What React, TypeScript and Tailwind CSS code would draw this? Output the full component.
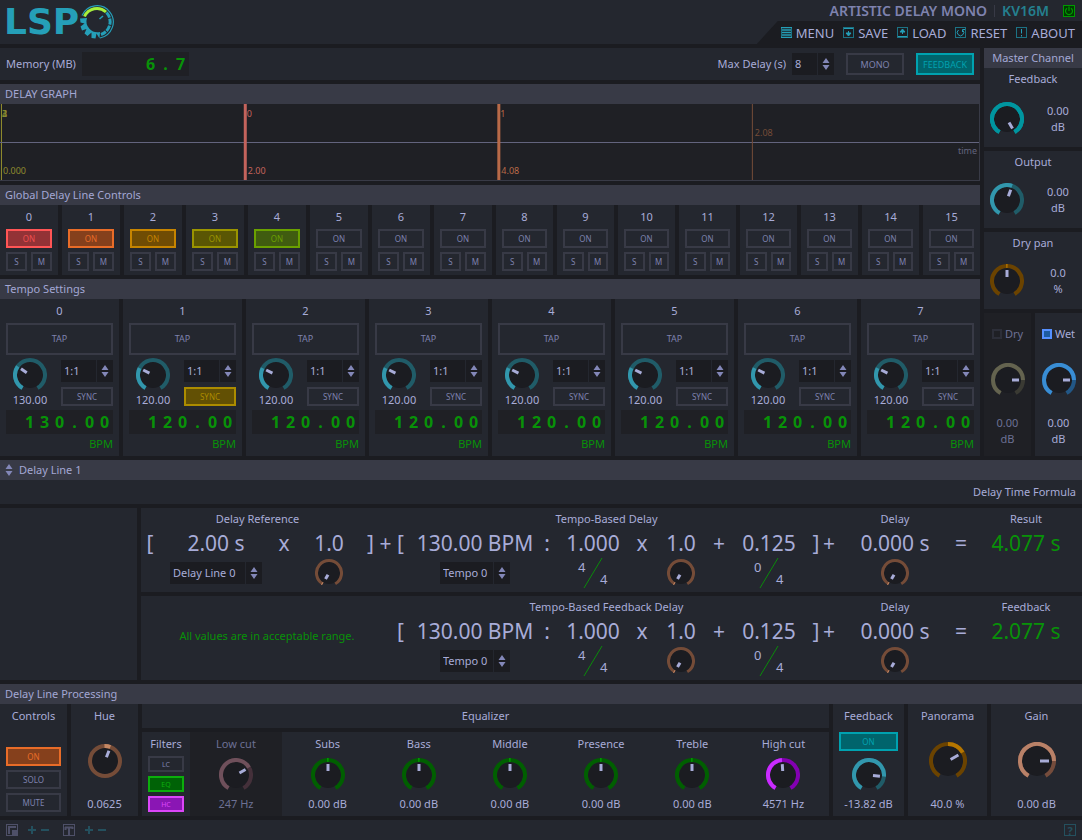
import { useState, type ReactNode } from 'react'
import clsx from 'clsx'

const TEAL = { dim: '#205c68', lit: '#3297ad' }
const BROWN = { dim: '#754c38', lit: '#c48763' }
const GREEN = { dim: '#005f00', lit: '#00a000' }
const ORANGE = { dim: '#6b4300', lit: '#b57600' }

type Tone = { dim: string; lit: string }

type KnobProps = {
  label: string
  // degrees clockwise from twelve o'clock
  angle: number
  from?: number
  size?: number
  tone?: Tone
  full?: boolean
}

function arc(c: number, r: number, a: number, b: number) {
  const point = (deg: number) => {
    const rad = (deg * Math.PI) / 180
    return `${c + r * Math.sin(rad)} ${c - r * Math.cos(rad)}`
  }
  return `M${point(a)} A${r} ${r} 0 ${b - a > 180 ? 1 : 0} 1 ${point(b)}`
}

function Knob({ label, angle, from = -150, size = 34, tone = TEAL, full = false }: KnobProps) {
  const c = size / 2
  const ring = size < 30 ? 3 : 4
  const r = c - ring / 2
  const tip = size < 30 ? 7 : size > 34 ? 12 : 11
  const tail = size < 30 ? 2 : size > 34 ? 3 : 4
  return (
    <span className="relative block shrink-0">
      <svg width={size} height={size} className="block" aria-hidden="true">
        <circle cx={c} cy={c} r={c - ring} fill="#1b1c21" />
        {full ? (
          <circle cx={c} cy={c} r={r} fill="none" stroke={tone.dim} strokeWidth={ring} />
        ) : (
          <path d={arc(c, r, -150, 150)} fill="none" stroke={tone.dim} strokeWidth={ring} />
        )}
        <path d={arc(c, r, from, Math.max(angle, from + 5))} fill="none" stroke={tone.lit} strokeWidth={ring} />
        <line
          x1={c}
          x2={c}
          y1={c - tail}
          y2={c - tip}
          stroke="#a8acd8"
          strokeWidth={3}
          transform={`rotate(${angle} ${c} ${c})`}
        />
      </svg>
      <input
        type="range"
        min={-180}
        max={180}
        defaultValue={angle}
        aria-label={label}
        className="absolute inset-0 h-full w-full cursor-pointer opacity-0"
      />
    </span>
  )
}

const IDLE = 'border-[#383a46] bg-[#24272f] text-[#7e82ae]'

type ToggleProps = {
  children: ReactNode
  label?: string
  on?: boolean
  tone?: string
  className?: string
}

function Toggle({ children, label, on = false, tone = IDLE, className }: ToggleProps) {
  const [active, setActive] = useState(on)
  return (
    <button
      type="button"
      aria-label={label}
      aria-pressed={active}
      onClick={() => setActive(!active)}
      className={clsx('flex items-center justify-center border-2 leading-none', active ? tone : IDLE, className)}
    >
      {children}
    </button>
  )
}

function Arrows() {
  return (
    <svg width="8" height="12" viewBox="0 0 8 12" fill="#8387b8" aria-hidden="true">
      <path d="M4 0 L7.5 5 H0.5 Z M4 12 L0.5 7 H7.5 Z" />
    </svg>
  )
}

function Combo({ label, options, className }: { label: string; options: string[]; className?: string }) {
  return (
    <span className={clsx('relative block h-[22px] bg-[#1b1c21]', className)}>
      <select
        aria-label={label}
        className="h-full w-full appearance-none bg-transparent pr-4 pl-[3px] text-[11px] leading-4 text-[#a8acd8] outline-none"
      >
        {options.map((o) => (
          <option key={o}>{o}</option>
        ))}
      </select>
      <span className="pointer-events-none absolute inset-y-0 right-0 flex w-[17px] items-center justify-center border-l border-[#24272f]">
        <Arrows />
      </span>
    </span>
  )
}

function Lcd({ value }: { value: string }) {
  return (
    <div className="flex h-6 w-[107px] items-center justify-end bg-[#1f2025] pr-px text-base font-bold text-[#089208]">
      {value.split('').map((ch, i) => (
        <span key={i} className="w-[15px] text-center">
          {ch}
        </span>
      ))}
    </div>
  )
}

function Bar({ children, className }: { children: ReactNode; className?: string }) {
  return (
    <h2 className={clsx('flex h-5 items-center bg-[#383a46] px-[5px] text-[11px] text-[#a3a7d4]', className)}>
      {children}
    </h2>
  )
}

function Logo() {
  return (
    <div className="flex items-center text-[#259fb8]">
      <span className="font-['DejaVu_Sans'] text-[36px] leading-[44px] font-bold">LSP</span>
      <svg width="36" height="36" viewBox="0 0 36 36" fill="none" aria-hidden="true">
        <path d="M3 11.500 A16.300 16.300 0 1 1 21 34" stroke="#259fb8" strokeWidth="1.200" />
        <path d="M5.500 12.500 A13.500 13.500 0 0 1 27 8" stroke="#a6f03c" strokeWidth="3" />
        <path d="M27.500 8.500 A13.500 13.500 0 0 1 22 30.500" stroke="#259fb8" strokeWidth="3" strokeDasharray="6 1" />
        <path
          d="M8 14 L1 14.500 L1.500 18.500 L5.500 19.500 L1.500 22.500 L3 26.500 L7.500 25 L5.500 29.500 L8.500 32 L12.500 28.500 L12.500 34 L16.500 34.500 L17.500 29.500 L20.500 34.500 L21 28 A11 11 0 0 1 8 14 Z"
          fill="#259fb8"
        />
        <path d="M20.500 15 L24 12" stroke="#259fb8" strokeWidth="1.600" />
      </svg>
    </div>
  )
}

const ICONS: Record<string, ReactNode> = {
  MENU: <path d="M0 0.500 H11 M1 3 H10 M1 5.500 H10 M1 8 H10 M0 10.500 H11" strokeWidth="1.300" />,
  SAVE: <path d="M1 1.500 H10 M5.500 4 V6 M3 6 H8 L5.500 9 Z" fill="#259fb8" />,
  LOAD: <path d="M1 9.500 H10 M5.500 7 V5 M3 5 H8 L5.500 2 Z" fill="#259fb8" />,
  RESET: <path d="M3.500 3 A3.200 3.200 0 1 0 7.500 3 M7.500 5 V2.500 H10" />,
  ABOUT: <path d="M5.500 2 V6.500 M5.500 8 V9.500" />,
}

function NavItem({ name }: { name: string }) {
  return (
    <button type="button" className="flex items-center gap-1 text-[13px] leading-5 text-[#a8acd8]">
      <svg width="11" height="11" viewBox="0 0 11 11" fill="none" stroke="#259fb8" aria-hidden="true">
        <rect x="0.500" y="0.500" width="10" height="10" stroke="#1c7284" />
        {ICONS[name]}
      </svg>
      {name}
    </button>
  )
}

function Header() {
  return (
    <header className="flex h-11 justify-between bg-[#24272f] pl-1">
      <Logo />
      <div className="flex flex-col items-end">
        <div className="flex h-[21px] items-center pr-[7px] text-sm font-semibold text-[#7e82ae]">
          <h1>ARTISTIC DELAY MONO</h1>
          <span className="mx-[7px] h-3 w-px bg-[#383a46]" />
          <span className="mr-[14px] text-[#24808f]">KV16M</span>
          <button type="button" aria-label="Bypass">
            <svg width="12" height="12" viewBox="0 0 12 12" fill="none" stroke="#009a00" className="block">
              <rect x="0.500" y="0.500" width="11" height="11" fill="#003c00" />
              <path d="M4 3.200 A3.500 3.500 0 1 0 8 3.200 M6 1.500 V6" strokeWidth="1.200" />
            </svg>
          </button>
        </div>
        <nav className="flex h-[23px] items-center gap-[9px] bg-[#1b1c21] pr-[7px] pl-6 [clip-path:polygon(21px_0,100%_0,100%_100%,0_100%)]">
          {Object.keys(ICONS).map((name) => (
            <NavItem key={name} name={name} />
          ))}
        </nav>
      </div>
    </header>
  )
}

function TopRow() {
  return (
    <div className="flex h-8 items-center bg-[#24272f] px-[6px]">
      <span className="w-[76px]">Memory (MB)</span>
      <Lcd value="6.7" />
      <span className="mr-[6px] ml-auto">Max Delay (s)</span>
      <Combo label="Max Delay (s)" options={['8', '16', '32']} className="w-[42px]" />
      <Toggle className="ml-3 h-[22px] w-[58px] text-[9px]">MONO</Toggle>
      <Toggle on tone="border-[#00a2b0] bg-[#00646c] text-[#00a2b0]" className="ml-3 h-[22px] w-[58px] text-[9px]">
        FEEDBACK
      </Toggle>
    </div>
  )
}

type MarkProps = { x: string; width?: number; color: string; top?: string; bottom?: string; mid?: string }

function Mark({ x, width = 1, color, top, bottom, mid }: MarkProps) {
  return (
    <svg x={x} overflow="visible" fill={color}>
      <rect width={width} height="76" />
      <text x={width} y="13">{top}</text>
      <text x={width + 1} y="70">{bottom}</text>
      <text x={width + 2} y="32">{mid}</text>
    </svg>
  )
}

function DelayGraph() {
  return (
    <section>
      <Bar>DELAY GRAPH</Bar>
      <svg className="block h-[77px] w-full border-r border-b border-[#383a46] bg-[#1f2025] text-[9px]">
        <Mark x="0.100%" color="#6f8a3e" top="2" />
        <Mark x="0.100%" color="#8f8a2e" top="3" />
        <Mark x="0.100%" color="#8f8a2e" top="4" bottom="0.000" />
        <rect y="38" width="100%" height="1" fill="#63647e" />
        <Mark x="24.900%" width={3} color="#c4635c" top="0" bottom="2.00" />
        <Mark x="50.800%" width={3} color="#b96a48" top="1" bottom="4.08" />
        <Mark x="76.800%" color="#754c38" mid="2.08" />
        <text x="99.800%" y="50" textAnchor="end" fill="#63647e">time</text>
      </svg>
    </section>
  )
}

const LINE_TONES = [
  'border-[#ff5555] bg-[#933236] text-[#f04f50]',
  'border-[#e86c28] bg-[#85401c] text-[#e86c28]',
  'border-[#c68400] bg-[#704c04] text-[#c68400]',
  'border-[#9a9400] bg-[#5a5604] text-[#9a9400]',
  'border-[#6aa000] bg-[#405c10] text-[#6aa000]',
]

function GlobalControls() {
  return (
    <section>
      <Bar>Global Delay Line Controls</Bar>
      <div className="grid grid-cols-[repeat(8,minmax(0,58fr))_repeat(8,minmax(0,57fr))] gap-1">
        {Array.from({ length: 16 }, (_, i) => (
          <div key={i} className="flex flex-col bg-[#24272f] px-[6px] pb-1">
            <span className="text-center leading-6">{i}</span>
            <Toggle label={`Line ${i} on`} on={i < 5} tone={LINE_TONES[i]} className="h-[19px] text-[8px]">
              ON
            </Toggle>
            <div className="mt-1 flex gap-1">
              <Toggle label={`Line ${i} solo`} className="h-[19px] flex-1 text-[8px]">S</Toggle>
              <Toggle label={`Line ${i} mute`} className="h-[19px] flex-1 text-[8px]">M</Toggle>
            </div>
          </div>
        ))}
      </div>
    </section>
  )
}

function TempoSettings() {
  return (
    <section>
      <Bar>Tempo Settings</Bar>
      <div className="grid grid-cols-8 gap-1">
        {Array.from({ length: 8 }, (_, i) => {
          const value = i === 0 ? '130.00' : '120.00'
          return (
            <div key={i} className="flex flex-col bg-[#24272f] px-[6px] pb-[2px]">
              <span className="text-center leading-6">{i}</span>
              <button
                type="button"
                aria-label={`Tap tempo ${i}`}
                className="h-8 border-2 border-[#383a46] text-[9px] text-[#7e82ae]"
              >
                TAP
              </button>
              <div className="mt-[3px] mb-[2px] flex justify-between">
                <div className="flex w-12 flex-col items-center">
                  <Knob label={`Tempo ${i}`} angle={i === 0 ? -55 : -63} />
                  <span className="leading-4">{value}</span>
                </div>
                <div className="flex w-[52px] flex-col gap-[5px] pt-[2px]">
                  <Combo label={`Tempo ${i} ratio`} options={['1:1', '1:2', '2:1']} />
                  <Toggle
                    label={`Tempo ${i} sync`}
                    on={i === 1}
                    tone="border-[#ac8c00] bg-[#625004] text-[#ac8c00]"
                    className="h-[19px] text-[8px]"
                  >
                    SYNC
                  </Toggle>
                </div>
              </div>
              <Lcd value={value} />
              <span className="text-right leading-5 text-[#089208]">BPM</span>
            </div>
          )
        })}
      </div>
    </section>
  )
}

type MasterKnobProps = {
  name: string
  unit: string
  value: string
  angle: number
  from?: number
  tone?: Tone
  className?: string
}

function MasterKnob({ name, unit, value, className, ...knob }: MasterKnobProps) {
  return (
    <div className={clsx('flex flex-col bg-[#24272f] pb-[1px]', className)}>
      <span className="text-center leading-[22px]">{name}</span>
      <div className="flex h-[54px] items-center gap-[10px] pl-[6px]">
        <Knob label={name} {...knob} />
        <span className="flex-1 text-center leading-4">
          {value}
          <br />
          {unit}
        </span>
      </div>
    </div>
  )
}

function MixStrip({ name, on = false, tone }: { name: string; on?: boolean; tone: Tone }) {
  return (
    <div
      className={clsx(
        'flex flex-1 flex-col items-center pt-3',
        on ? 'bg-[#24272f]' : 'bg-[#1f2025] text-[#6c7094]'
      )}
    >
      <label className="flex items-center gap-[3px] leading-[18px]">
        <input
          type="checkbox"
          defaultChecked={on}
          className="size-[10px] appearance-none border-2 border-[#2c2e38] checked:border-[#5590ff] checked:bg-[#1d5ba0]"
        />
        {name}
      </label>
      <div className="mt-5 mb-[18px]">
        <Knob label={name} angle={90} tone={tone} />
      </div>
      <span className="text-center leading-4">
        0.00
        <br />
        dB
      </span>
    </div>
  )
}

function MasterChannel() {
  return (
    <aside className="flex w-[98px] shrink-0 flex-col gap-1">
      <div className="bg-[#24272f]">
        <Bar className="justify-center">Master Channel</Bar>
        <MasterKnob
          name="Feedback"
          value="0.00"
          unit="dB"
          angle={150}
          tone={{ dim: '#00959f', lit: '#00959f' }}
          className="gap-[2px]"
        />
      </div>
      <MasterKnob name="Output" value="0.00" unit="dB" angle={20} />
      <MasterKnob name="Dry pan" value="0.0" unit="%" from={-3} angle={0} tone={ORANGE} />
      <div className="flex flex-1 gap-1">
        <MixStrip name="Dry" tone={{ dim: '#3a3a33', lit: '#64634f' }} />
        <MixStrip name="Wet" on tone={{ dim: '#225786', lit: '#398dd4' }} />
      </div>
    </aside>
  )
}

function Fraction({ top, bottom }: { top: number; bottom: number }) {
  return (
    <svg width="36" height="32" className="block text-[13px]" fill="#a8acd8" aria-label={`${top}/${bottom}`}>
      <path d="M9 31 L27 1" stroke="#0a8a0a" strokeWidth="1" />
      <text x="3" y="15">{top}</text>
      <text x="25" y="27">{bottom}</text>
    </svg>
  )
}

// One formula line: a heading row, a row of big values and a row of controls
function Formula({ feedback = false, result }: { feedback?: boolean; result: string }) {
  const big = 'row-start-2 text-[21px] leading-[26px] whitespace-nowrap'
  const ctl = 'row-start-3 flex items-center justify-center'
  const name = feedback ? 'Feedback delay' : 'Delay'
  return (
    <div className="grid grid-cols-[minmax(0,18fr)_minmax(0,114fr)_minmax(0,22fr)_minmax(0,68fr)_minmax(0,15fr)_minmax(0,15fr)_minmax(0,15fr)_minmax(0,134fr)_minmax(0,10fr)_minmax(0,82fr)_minmax(0,16fr)_minmax(0,62fr)_minmax(0,14fr)_minmax(0,86fr)_minmax(0,8fr)_minmax(0,18fr)_minmax(0,114fr)_minmax(0,18fr)_minmax(0,112fr)] grid-rows-[22px_28px_30px] justify-items-center bg-[#24272f] pb-1">
      {feedback ? (
        <p className="col-start-1 col-end-7 row-start-1 row-end-4 self-center text-[#089208]">
          All values are in acceptable range.
        </p>
      ) : (
        <>
          <h3 className="col-start-1 col-end-6 row-start-1 pr-1 leading-[22px]">Delay Reference</h3>
          <span className={clsx(big, 'col-start-1')}>[</span>
          <span className={clsx(big, 'col-start-2')}>2.00 s</span>
          <span className={clsx(big, 'col-start-3')}>x</span>
          <span className={clsx(big, 'col-start-4')}>1.0</span>
          <span className={clsx(big, 'col-start-5')}>]</span>
          <span className={clsx(big, 'col-start-6')}>+</span>
          <div className={clsx(ctl, 'col-start-2')}>
            <Combo label="Delay reference" options={['Delay Line 0', 'Delay Line 2']} className="w-[92px]" />
          </div>
          <div className={clsx(ctl, 'col-start-4')}>
            <Knob label="Reference multiplier" size={28} angle={-150} tone={BROWN} />
          </div>
        </>
      )}
      <h3 className="col-start-7 col-end-16 row-start-1 leading-[22px]">
        {feedback ? 'Tempo-Based Feedback Delay' : 'Tempo-Based Delay'}
      </h3>
      <h3 className="col-start-17 row-start-1 leading-[22px]">Delay</h3>
      <h3 className="col-start-19 row-start-1 leading-[22px]">{feedback ? 'Feedback' : 'Result'}</h3>

      <span className={clsx(big, 'col-start-7')}>[</span>
      <span className={clsx(big, 'col-start-8')}>130.00 BPM</span>
      <span className={clsx(big, 'col-start-9')}>:</span>
      <span className={clsx(big, 'col-start-10')}>1.000</span>
      <span className={clsx(big, 'col-start-11')}>x</span>
      <span className={clsx(big, 'col-start-12')}>1.0</span>
      <span className={clsx(big, 'col-start-13')}>+</span>
      <span className={clsx(big, 'col-start-14')}>0.125</span>
      <span className={clsx(big, 'col-start-15')}>]</span>
      <span className={clsx(big, 'col-start-16')}>+</span>
      <span className={clsx(big, 'col-start-17')}>0.000 s</span>
      <span className={clsx(big, 'col-start-18')}>=</span>
      <span className={clsx(big, 'col-start-19 text-[#089208]')}>{result}</span>

      <div className={clsx(ctl, 'col-start-8')}>
        <Combo label={`${name} tempo`} options={['Tempo 0', 'Tempo 1']} className="w-[70px]" />
      </div>
      <div className={clsx(ctl, 'col-start-10')}>
        <Fraction top={4} bottom={4} />
      </div>
      <div className={clsx(ctl, 'col-start-12')}>
        <Knob label={`${name} multiplier`} size={28} angle={-150} tone={BROWN} />
      </div>
      <div className={clsx(ctl, 'col-start-14')}>
        <Fraction top={0} bottom={4} />
      </div>
      <div className={clsx(ctl, 'col-start-17')}>
        <Knob label={`${name} time`} size={28} angle={-150} tone={BROWN} />
      </div>
    </div>
  )
}

function DelayLine() {
  return (
    <section className="flex flex-col gap-1">
      <div>
        <Bar className="gap-[2px]">
          <Arrows />
          <select
            aria-label="Delay line"
            defaultValue="Delay Line 1"
            className="appearance-none bg-transparent pl-1 outline-none"
          >
            <option>Delay Line 0</option>
            <option>Delay Line 1</option>
          </select>
        </Bar>
        <p className="bg-[#24272f] pr-[6px] text-right leading-6">Delay Time Formula</p>
      </div>
      <div className="flex gap-1">
        <div className="w-[137px] shrink-0 bg-[#24272f]" />
        <div className="flex flex-1 flex-col gap-1">
          <Formula result="4.077 s" />
          <Formula feedback result="2.077 s" />
        </div>
      </div>
    </section>
  )
}

const BANDS = [
  { name: 'Subs', value: '0.00 dB', angle: 0, from: -3, tone: GREEN },
  { name: 'Bass', value: '0.00 dB', angle: 0, from: -3, tone: GREEN },
  { name: 'Middle', value: '0.00 dB', angle: 0, from: -3, tone: GREEN },
  { name: 'Presence', value: '0.00 dB', angle: 0, from: -3, tone: GREEN },
  { name: 'Treble', value: '0.00 dB', angle: 0, from: -3, tone: GREEN },
  { name: 'High cut', value: '4571 Hz', angle: -4, from: -150, tone: { dim: '#8300b2', lit: '#c92cff' } },
]

type BandProps = { name: string; value: string; angle: number; from?: number; tone: Tone; className?: string }

function Band({ name, value, className, ...knob }: BandProps) {
  return (
    <div className={clsx('flex flex-col items-center', className)}>
      <span className="mb-[2px] leading-6">{name}</span>
      <Knob label={name} {...knob} />
      <span className="mt-1 leading-4">{value}</span>
    </div>
  )
}

function Equalizer() {
  return (
    <div className="flex flex-1 flex-col gap-1">
      <h3 className="bg-[#24272f] text-center leading-6">Equalizer</h3>
      <div className="flex flex-1">
        <div className="flex w-12 flex-col gap-1 bg-[#24272f] px-[6px] pb-1">
          <span className="-mb-1 text-center leading-6">Filters</span>
          <Toggle label="Low cut filter" className="h-4 text-[7px]">LC</Toggle>
          <Toggle label="Equalizer" on tone="border-[#0cae0c] bg-[#006206] text-[#0cae0c]" className="h-4 text-[7px]">
            EQ
          </Toggle>
          <Toggle
            label="High cut filter"
            on
            tone="border-[#dc46fa] bg-[#8a16b4] text-[#dc46fa]"
            className="h-4 text-[7px]"
          >
            HC
          </Toggle>
        </div>
        <Band
          name="Low cut"
          value="247 Hz"
          angle={60}
          tone={{ dim: '#44303a', lit: '#6f505b' }}
          className="w-[92px] bg-[#1f2025] text-[#6c7094]"
        />
        <div className="grid flex-1 grid-cols-6 bg-[#24272f]">
          {BANDS.map((band) => (
            <Band key={band.name} {...band} />
          ))}
        </div>
      </div>
    </div>
  )
}

function Processing() {
  const panel = 'flex shrink-0 flex-col items-center bg-[#24272f]'
  return (
    <section>
      <Bar>Delay Line Processing</Bar>
      <div className="flex h-28 gap-1">
        <div className={clsx(panel, 'w-[67px] gap-1 px-[6px] pb-1')}>
          <span className="mb-auto leading-6">Controls</span>
          <Toggle on tone={LINE_TONES[1]} className="h-[19px] w-full text-[8px]">ON</Toggle>
          <Toggle className="h-[19px] w-full text-[8px]">SOLO</Toggle>
          <Toggle className="h-[19px] w-full text-[8px]">MUTE</Toggle>
        </div>
        <div className={clsx(panel, 'w-[67px] justify-between pb-[2px]')}>
          <span className="leading-6">Hue</span>
          <Knob label="Hue" from={-2} angle={21} tone={BROWN} full />
          <span className="leading-5">0.0625</span>
        </div>
        <Equalizer />
        <div className={clsx(panel, 'w-[71px] px-[6px]')}>
          <span className="mb-1 leading-6">Feedback</span>
          <Toggle
            label="Line feedback on"
            on
            tone="border-[#00a2b0] bg-[#00646c] text-[#00a2b0]"
            className="mb-[7px] h-[19px] w-full text-[8px]"
          >
            ON
          </Toggle>
          <Knob label="Line feedback" angle={96} />
          <span className="mt-1 leading-4 whitespace-nowrap">-13.82 dB</span>
        </div>
        <div className={clsx(panel, 'w-[79px] justify-between pb-[2px]')}>
          <span className="leading-6">Panorama</span>
          <Knob label="Panorama" size={38} from={0} angle={60} tone={ORANGE} />
          <span className="leading-5">40.0 %</span>
        </div>
        <div className={clsx(panel, 'w-[91px] justify-between pb-[2px]')}>
          <span className="leading-6">Gain</span>
          <Knob label="Gain" size={38} angle={90} tone={{ dim: '#754c3c', lit: '#b98168' }} />
          <span className="leading-5">0.00 dB</span>
        </div>
      </div>
    </section>
  )
}

function ZoomButtons({ target }: { target: string }) {
  return (
    <>
      <button type="button" aria-label={`Increase ${target}`} className="ml-[10px]">
        <svg width="8" height="8" stroke="#24505e" strokeWidth="2" className="block">
          <path d="M4 0 V8 M0 4 H8" />
        </svg>
      </button>
      <button type="button" aria-label={`Decrease ${target}`} className="ml-[5px]">
        <svg width="8" height="8" stroke="#24505e" strokeWidth="2" className="block">
          <path d="M0 4 H8" />
        </svg>
      </button>
    </>
  )
}

function Footer() {
  return (
    <footer className="flex h-5 items-center bg-[#24272f] px-[6px]">
      <svg width="12" height="12" fill="none" stroke="#4e5068" aria-hidden="true">
        <rect x="0.500" y="0.500" width="11" height="11" />
        <path d="M3 10 V3 H10" strokeWidth="2" />
        <rect x="6" y="6" width="5" height="5" fill="#4e5068" stroke="none" />
      </svg>
      <ZoomButtons target="interface scale" />
      <svg width="12" height="12" fill="none" stroke="#4e5068" className="ml-[14px]" aria-hidden="true">
        <rect x="0.500" y="0.500" width="11" height="11" />
        <path d="M2 3.500 H10 M2.500 3 V6 M9.500 3 V5 M6 3 V11" strokeWidth="2" />
      </svg>
      <ZoomButtons target="font scale" />
      <button
        type="button"
        aria-label="Help"
        className="ml-auto flex size-3 items-center justify-center border border-[#24505e] text-[11px] leading-none font-bold text-[#24505e]"
      >
        ?
      </button>
    </footer>
  )
}

export default function App() {
  return (
    <div className="flex flex-col gap-1 bg-[#1b1c21] font-['Noto_Sans',sans-serif] text-[11px] text-[#a8acd8]">
      <Header />
      <div className="flex gap-1">
        <main className="flex min-w-0 flex-1 flex-col gap-1">
          <TopRow />
          <DelayGraph />
          <GlobalControls />
          <TempoSettings />
        </main>
        <MasterChannel />
      </div>
      <DelayLine />
      <Processing />
      <Footer />
    </div>
  )
}
